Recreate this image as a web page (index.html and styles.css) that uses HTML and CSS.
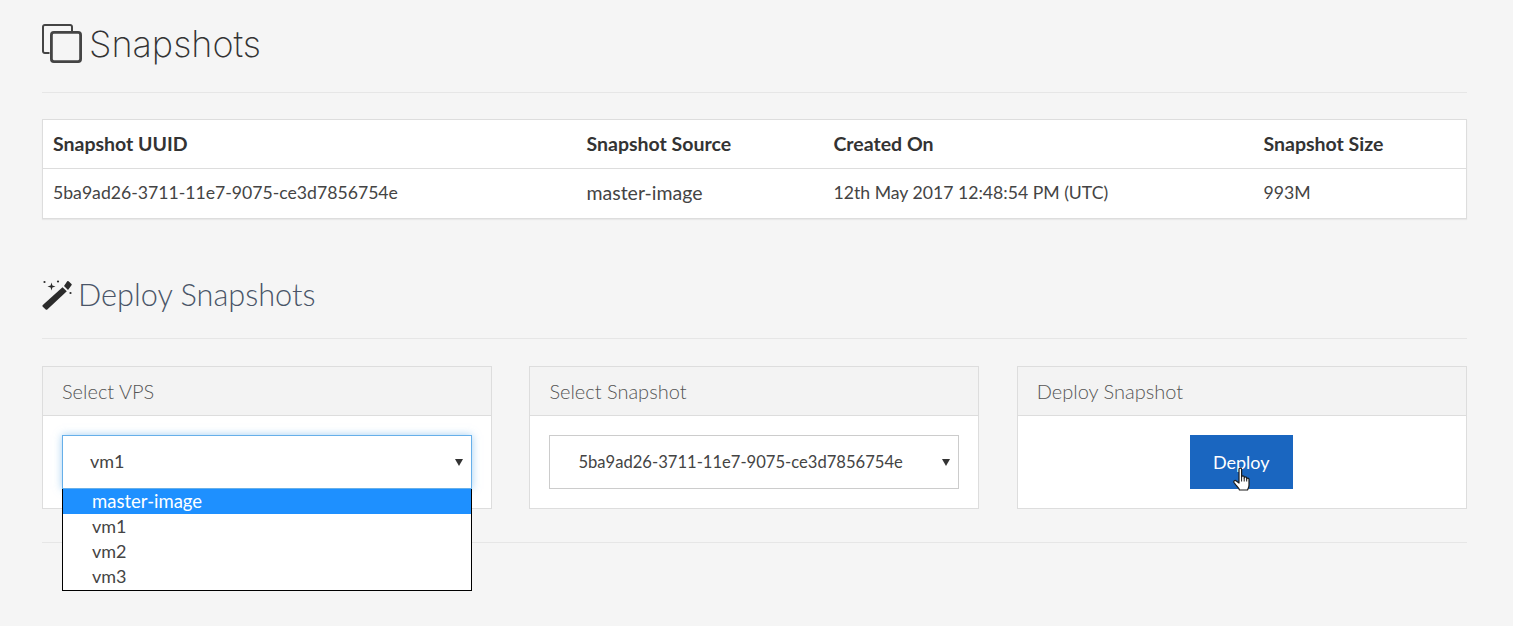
FILE: index.html
```html
<!DOCTYPE html>
<html lang="en">
<head>
<meta charset="utf-8">
<title>Snapshots</title>
<link rel="stylesheet" href="styles.css">
</head>
<body>
<main class="page">
  <h1 class="title">
    <svg class="title-icon" viewBox="0 0 40 40" width="40" height="40" aria-hidden="true">
      <path d="M7.500 29H2.800a1.800 1.800 0 0 1-1.800-1.800V2.800A1.800 1.800 0 0 1 2.800 1h25.400A1.800 1.800 0 0 1 30 2.800V7.500" fill="none" stroke="#444" stroke-width="2"/>
      <rect x="9.400" y="8.400" width="29.200" height="29.200" rx="2.500" fill="none" stroke="#444" stroke-width="2.800"/>
    </svg>
    <span>Snapshots</span>
  </h1>
  <hr class="rule rule-title">
  <table class="snapshots">
    <colgroup><col class="c1"><col class="c2"><col class="c3"><col class="c4"></colgroup>
    <thead>
      <tr><th>Snapshot UUID</th><th>Snapshot Source</th><th>Created On</th><th>Snapshot Size</th></tr>
    </thead>
    <tbody>
      <tr><td>5ba9ad26-3711-11e7-9075-ce3d7856754e</td><td class="td-name">master-image</td><td>12th May 2017 12:48:54 PM (UTC)</td><td>993M</td></tr>
    </tbody>
  </table>
  <h2 class="subtitle">
    <svg class="wand" viewBox="0 0 32 32" width="32" height="32" aria-hidden="true">
      <path d="M20.500 8.300 24.800 12.300 5.300 30.400a1.200 1.200 0 0 1-1.600 0L.8 27.700a1.200 1.200 0 0 1 0-1.700z" fill="#2b2b2b"/>
      <path d="M22 7 25.200 2.300a1 1 0 0 1 1.400-.1l2.900 2.700a1 1 0 0 1 0 1.400L26 11z" fill="#2b2b2b"/>
      <path d="M9.500 3.500l.9 3.100 3.100.9-3.100.9-.9 3.100-.9-3.100-3.100-.9 3.100-.9z" fill="#2b2b2b"/>
      <circle cx="2.500" cy="3" r="1.100" fill="#2b2b2b"/><circle cx="16" cy="2.500" r="1.100" fill="#2b2b2b"/><circle cx="28.500" cy="14" r="1.100" fill="#2b2b2b"/>
    </svg>
    <span>Deploy Snapshots</span>
  </h2>
  <hr class="rule rule-sub">
  <section class="cards">
    <div class="card">
      <div class="card-head">Select VPS</div>
      <div class="card-body">
        <div class="select-wrap">
          <div class="select focused"><span>vm1</span><i class="caret"></i></div>
          <ul class="options">
            <li class="active">master-image</li>
            <li>vm1</li>
            <li>vm2</li>
            <li>vm3</li>
          </ul>
        </div>
      </div>
    </div>
    <div class="card">
      <div class="card-head">Select Snapshot</div>
      <div class="card-body">
        <div class="select select-uuid"><span>5ba9ad26-3711-11e7-9075-ce3d7856754e</span><i class="caret"></i></div>
      </div>
    </div>
    <div class="card">
      <div class="card-head">Deploy Snapshot</div>
      <div class="card-body center">
        <div class="btn-wrap">
          <button class="btn" type="button">Deploy</button>
          <svg class="hand" viewBox="0 0 18 26" width="18" height="26" aria-hidden="true">
            <path d="M6 2.200c0-1.500 2.600-1.500 2.600 0V10c.2-1.500 2.500-1.500 2.600 0v1c.2-1.400 2.400-1.400 2.500 0v1c.2-1.200 2.300-1.200 2.300.300V18c0 2.500-1 3.500-1.500 5H6.500c-.5-1.800-2-3-3.500-4.800L1 15.500c-.8-1.500 1-2.800 2.300-1.500L6 16z" fill="#fff" stroke="#1c1c1c" stroke-width="1.200" stroke-linejoin="round"/>
            <path d="M8.600 10v4.500M11.200 11v3.500M13.700 12v2.500" stroke="#1c1c1c" stroke-width="1" fill="none"/>
          </svg>
        </div>
      </div>
    </div>
  </section>
  <hr class="rule rule-end">
</main>
</body>
</html>
```
FILE: styles.css
```css
* { box-sizing: border-box; }
html, body { margin: 0; height: 100%; }
body {
  background: #f5f5f5;
  color: #333;
  font-family: "Lato", "Open Sans", sans-serif;
  font-size: 18px;
  overflow: hidden;
}
.page { padding: 0 46px 0 42px; height: 626px; }
.title {
  display: flex;
  align-items: center;
  gap: 7px;
  margin: 0;
  padding-top: 24px;
  height: 64px;
  font-family: "Inter", "Open Sans", sans-serif;
  font-weight: 200;
  font-size: 36px;
  line-height: 40px;
  color: #333;
}
.title-icon { flex: none; }
.rule { border: 0; border-top: 1px solid #e6e6e6; margin: 0; }
.rule-title { margin-top: 28px; }
.snapshots {
  margin-top: 26px;
  width: 100%;
  table-layout: fixed;
  border-collapse: collapse;
  background: #fff;
  border: 1px solid #ddd;
  box-shadow: 0 1px 1px rgba(0,0,0,.05);
}
.c1 { width: 534px; } .c2 { width: 247px; } .c3 { width: 430px; }
.snapshots th, .snapshots td {
  padding: 0 10px;
  text-align: left;
}
.snapshots th { height: 49px; padding-bottom: 2px; font-size: 19.5px; font-weight: 700; border-bottom: 1px solid #ddd; color: #333; }
.snapshots td { height: 50px; padding-bottom: 2px; font-size: 17.65px; color: #444; }
.snapshots td.td-name { font-size: 19.5px; }
.subtitle {
  display: flex;
  align-items: center;
  gap: 4px;
  margin: 56px 0 0;
  height: 40px;
  font-weight: 300;
  font-family: "Lato", sans-serif;
  font-size: 30.7px;
  line-height: 38px;
  color: #4a5568;
}
.wand { flex: none; }
.rule-sub { margin-top: 23px; }
.cards {
  display: grid;
  grid-template-columns: repeat(3, 450px);
  column-gap: 37.4px;
  margin-top: 27px;
}
.card { background: #fff; border: 1px solid #ddd; height: 143px; }
.card-head {
  height: 49px;
  padding: 0 19px;
  background: #f3f3f3;
  border-bottom: 1px solid #ddd;
  font-weight: 300;
  font-size: 20px;
  line-height: 48px;
  color: #555;
}
.card-body { padding: 19px; }
.card-body.center { display: flex; justify-content: center; padding-right: 20px; }
.select-wrap { position: relative; }
.select {
  display: flex;
  align-items: center;
  justify-content: space-between;
  height: 54px;
  padding: 0 8px 2px 27px;
  background: #fff;
  border: 1px solid #ccc;
  color: #444;
  font-size: 18px;
}
.select-uuid { font-size: 16.6px; padding: 0 8px 1px 28px; }
.select.focused {
  border-color: #66afe9;
  box-shadow: 0 0 8px rgba(102,175,233,.6);
}
.caret {
  width: 0; height: 0;
  margin-top: 2px;
  border-left: 4px solid transparent;
  border-right: 4px solid transparent;
  border-top: 7px solid #333;
}
.options {
  position: absolute;
  left: 0; right: 0; top: 54px;
  margin: 0;
  padding: 0 0 1px;
  list-style: none;
  background: #fff;
  border: 1px solid #000;
  border-top: 0;
  z-index: 2;
}
.options li {
  height: 25px;
  line-height: 25px;
  padding-left: 29px;
  font-size: 18px;
  color: #444;
}
.options li.active { background: #1e90ff; color: #fff; font-size: 18.5px; }
.btn-wrap { position: relative; }
.btn {
  display: block;
  width: 103px;
  height: 54px;
  border: 0;
  background: #1a66c0;
  color: #fff;
  font-family: "Lato", sans-serif;
  font-size: 18px;
  padding: 0;
}
.hand { position: absolute; left: 43px; top: 32px; }
.rule-end { margin-top: 33px; }
```
